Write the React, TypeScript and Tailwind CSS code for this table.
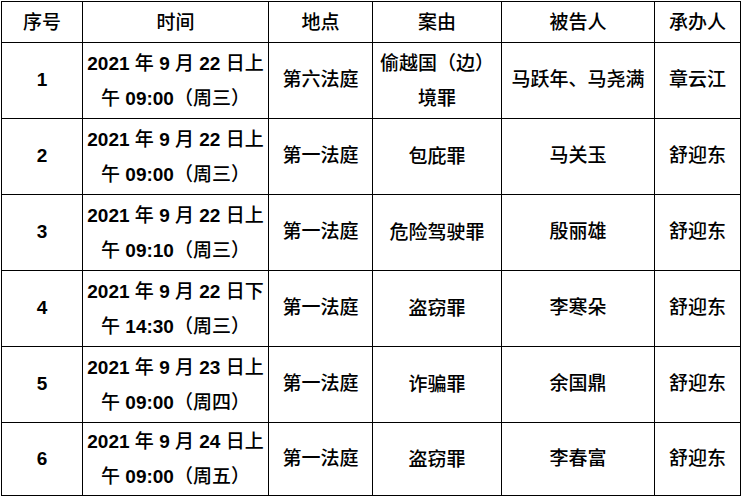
const rows = [
  {
    no: "1",
    time: ["2021 年 9 月 22 日上", "午 09:00（周三）"],
    place: "第六法庭",
    reason: ["偷越国（边）", "境罪"],
    defendant: "马跃年、马尧满",
    judge: "章云江",
  },
  {
    no: "2",
    time: ["2021 年 9 月 22 日上", "午 09:00（周三）"],
    place: "第一法庭",
    reason: ["包庇罪"],
    defendant: "马关玉",
    judge: "舒迎东",
  },
  {
    no: "3",
    time: ["2021 年 9 月 22 日上", "午 09:10（周三）"],
    place: "第一法庭",
    reason: ["危险驾驶罪"],
    defendant: "殷丽雄",
    judge: "舒迎东",
  },
  {
    no: "4",
    time: ["2021 年 9 月 22 日下", "午 14:30（周三）"],
    place: "第一法庭",
    reason: ["盗窃罪"],
    defendant: "李寒朵",
    judge: "舒迎东",
  },
  {
    no: "5",
    time: ["2021 年 9 月 23 日上", "午 09:00（周四）"],
    place: "第一法庭",
    reason: ["诈骗罪"],
    defendant: "余国鼎",
    judge: "舒迎东",
  },
  {
    no: "6",
    time: ["2021 年 9 月 24 日上", "午 09:00（周五）"],
    place: "第一法庭",
    reason: ["盗窃罪"],
    defendant: "李春富",
    judge: "舒迎东",
  },
];

const headers = ["序号", "时间", "地点", "案由", "被告人", "承办人"];

const cell =
  "border-r border-b border-black flex flex-col items-center justify-center text-center whitespace-nowrap";

// digits in the source document render heavier than the CJK text
function Num({ text }: { text: string }) {
  const parts = text.split(/([0-9:]+)/);
  return (
    <>
      {parts.map((p, i) =>
        /^[0-9:]+$/.test(p) ? (
          <span key={i} className="font-semibold">
            {p}
          </span>
        ) : (
          <span key={i}>{p}</span>
        )
      )}
    </>
  );
}

function App() {
  return (
    <div className="bg-white w-[742px] h-[498px] pt-px pl-px font-['Liberation_Sans','Noto_Sans_CJK_SC',sans-serif] font-medium text-[19px] text-black">
      <div className="grid grid-cols-[81px_186px_104px_129px_153px_86px] grid-rows-[41px_76px_76px_76px_76px_76px_73px] border-l border-t border-black w-[740px]">
        {headers.map((h) => (
          <div key={h} className={`${cell} leading-none`}>
            {h}
          </div>
        ))}
        {rows.map((r) => [
          <div key={r.no + "a"} className={cell}>
            <Num text={r.no} />
          </div>,
          <div key={r.no + "b"} className={`${cell} leading-[35px]`}>
            <div>
              <Num text={r.time[0]} />
            </div>
            <div>
              <Num text={r.time[1]} />
            </div>
          </div>,
          <div key={r.no + "c"} className={cell}>
            {r.place}
          </div>,
          <div key={r.no + "d"} className={`${cell} leading-[35px]`}>
            {r.reason.map((t, j) => (
              <div key={j}>{t}</div>
            ))}
          </div>,
          <div key={r.no + "e"} className={cell}>
            {r.defendant}
          </div>,
          <div key={r.no + "f"} className={cell}>
            {r.judge}
          </div>,
        ])}
      </div>
    </div>
  );
}

export default App;
